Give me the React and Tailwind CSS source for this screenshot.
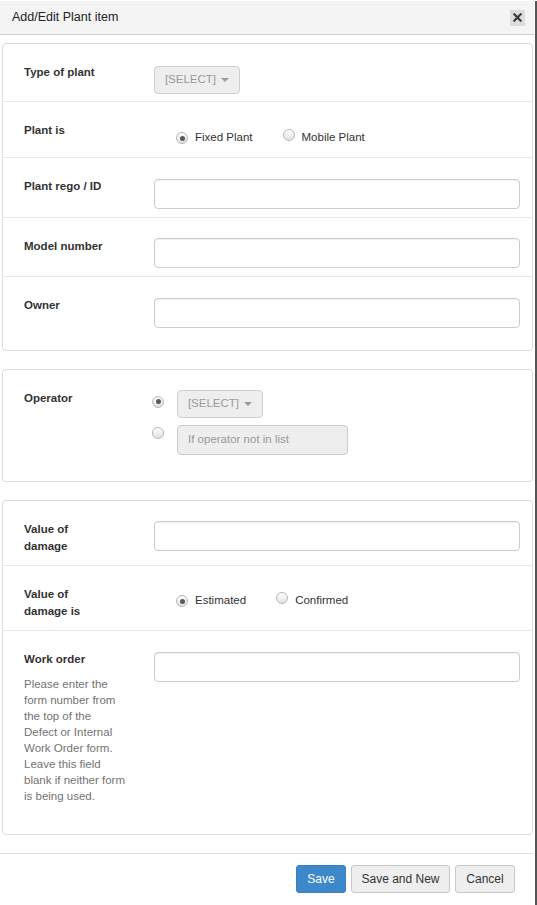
const font = { fontFamily: '"Liberation Sans", Arial, sans-serif' }

function Radio({ checked }) {
  return (
    <span className="inline-flex w-[12px] h-[12px] shrink-0 items-center justify-center rounded-full border border-[#b8b8b8] bg-gradient-to-b from-[#fdfdfd] to-[#e2e2e2]">
      {checked && <span className="w-[5px] h-[5px] rounded-full bg-[#5a5a5a]" />}
    </span>
  )
}

function SelectBtn() {
  return (
    <div className="flex items-center justify-center gap-[5px] w-[86px] h-[28px] rounded-[4px] border border-[#cfcfcf] bg-[#eeeeee] text-[#9a9a9a]">
      <span>[SELECT]</span>
      <span className="w-0 h-0 border-l-[4px] border-r-[4px] border-t-[4px] border-l-transparent border-r-transparent border-t-[#9a9a9a]" />
    </div>
  )
}

function Input({ className = '' }) {
  return <div className={`h-[30px] flex-1 rounded-[4px] border border-[#cccccc] bg-white shadow-[inset_0_1px_1px_rgba(0,0,0,0.06)] ${className}`} />
}

function Row({ label, h, children, last }) {
  return (
    <div className={`flex pt-[20px] pl-[21px] pr-[12px] ${last ? '' : 'border-b border-[#e7e7e7]'}`} style={{ height: h }}>
      <div className="w-[130px] shrink-0 font-bold text-[#333] leading-[17px]">{label}</div>
      {children}
    </div>
  )
}

export default function App() {
  return (
    <div className="w-[537px] h-[905px] bg-white text-[11.5px] text-[#333]" style={font}>
      <div className="w-[537px] h-[905px] border-r-2 border-[#555]">
        <div className="h-[34px] mt-[1px] mr-[1px] bg-[#f4f4f4] border-b border-[#cdcdcd] flex items-center justify-between pl-[12px] pr-[9px]">
          <span className="text-[12.5px] text-[#222]">Add/Edit Plant item</span>
          <span className="w-[15px] h-[16px] bg-[#dcdcdc] flex items-center justify-center">
            <svg width="9" height="9" viewBox="0 0 10 10">
              <path d="M1.5 1.5 L8.5 8.5 M8.5 1.5 L1.5 8.5" stroke="#3a3a3a" strokeWidth="2.4" strokeLinecap="square" />
            </svg>
          </span>
        </div>

        <div className="px-[2px] pt-[8px]">
          {/* panel 1 */}
          <div className="border border-[#dcdcdc] rounded-[4px]">
            <Row label="Type of plant" h={58}>
              <div className="mt-[2px]"><SelectBtn /></div>
            </Row>
            <Row label="Plant is" h={56}>
              <div className="flex items-center h-[16px] mt-[8px] pl-[22px]">
                <Radio checked />
                <span className="ml-[7px]">Fixed Plant</span>
                <span className="ml-[30px]"><Radio /></span>
                <span className="ml-[7px]">Mobile Plant</span>
              </div>
            </Row>
            <Row label="Plant rego / ID" h={60}>
              <Input className="mt-[1px]" />
            </Row>
            <Row label="Model number" h={59}>
              <Input className="mt-[0px]" />
            </Row>
            <Row label="Owner" h={73} last>
              <Input className="mt-[1px]" />
            </Row>
          </div>

          {/* panel 2 */}
          <div className="mt-[18px] border border-[#dcdcdc] rounded-[4px] h-[113px] flex pt-[20px] pl-[21px]">
            <div className="w-[128px] shrink-0 font-bold leading-[17px]">Operator</div>
            <div className="flex flex-col gap-[7px]">
              <div className="flex items-start gap-[13px]">
                <div className="mt-[2px]"><Radio checked /></div>
                <SelectBtn />
              </div>
              <div className="flex items-start gap-[13px]">
                <div className="mt-[2px]"><Radio /></div>
                <div className="w-[171px] h-[30px] rounded-[4px] border border-[#cccccc] bg-[#eeeeee] text-[#999] flex items-center pl-[10px]">
                  If operator not in list
                </div>
              </div>
            </div>
          </div>

          {/* panel 3 */}
          <div className="mt-[18px] border border-[#dcdcdc] rounded-[4px]">
            <Row label={<>Value of<br />damage</>} h={65}>
              <Input className="mt-[0px]" />
            </Row>
            <Row label={<>Value of<br />damage is</>} h={65}>
              <div className="flex items-center h-[16px] mt-[7px] pl-[22px]">
                <Radio checked />
                <span className="ml-[7px]">Estimated</span>
                <span className="ml-[30px]"><Radio /></span>
                <span className="ml-[7px]">Confirmed</span>
              </div>
            </Row>
            <div className="flex pt-[20px] pl-[21px] pr-[12px] h-[203px]">
              <div className="w-[130px] shrink-0">
                <div className="font-bold leading-[17px]">Work order</div>
                <div className="mt-[8px] text-[#737373] leading-[16px]">
                  Please enter the<br />
                  form number from<br />
                  the top of the<br />
                  Defect or Internal<br />
                  Work Order form.<br />
                  Leave this field<br />
                  blank if neither form<br />
                  is being used.
                </div>
              </div>
              <Input className="mt-[1px]" />
            </div>
          </div>
        </div>

        <div className="mt-[18px] border-t border-[#dddddd] mr-[2px] flex justify-end gap-[5px] pt-[11px] pr-[18px]">
          <div className="h-[28px] w-[50px] rounded-[3px] bg-[#3d88cb] border border-[#3a7fbf] text-white flex items-center justify-center text-[12px]">Save</div>
          <div className="h-[28px] w-[99px] rounded-[3px] bg-[#eeeeee] border border-[#c8c8c8] flex items-center justify-center text-[12px]">Save and New</div>
          <div className="h-[28px] w-[60px] rounded-[3px] bg-[#eeeeee] border border-[#c8c8c8] flex items-center justify-center text-[12px]">Cancel</div>
        </div>
      </div>
    </div>
  )
}
